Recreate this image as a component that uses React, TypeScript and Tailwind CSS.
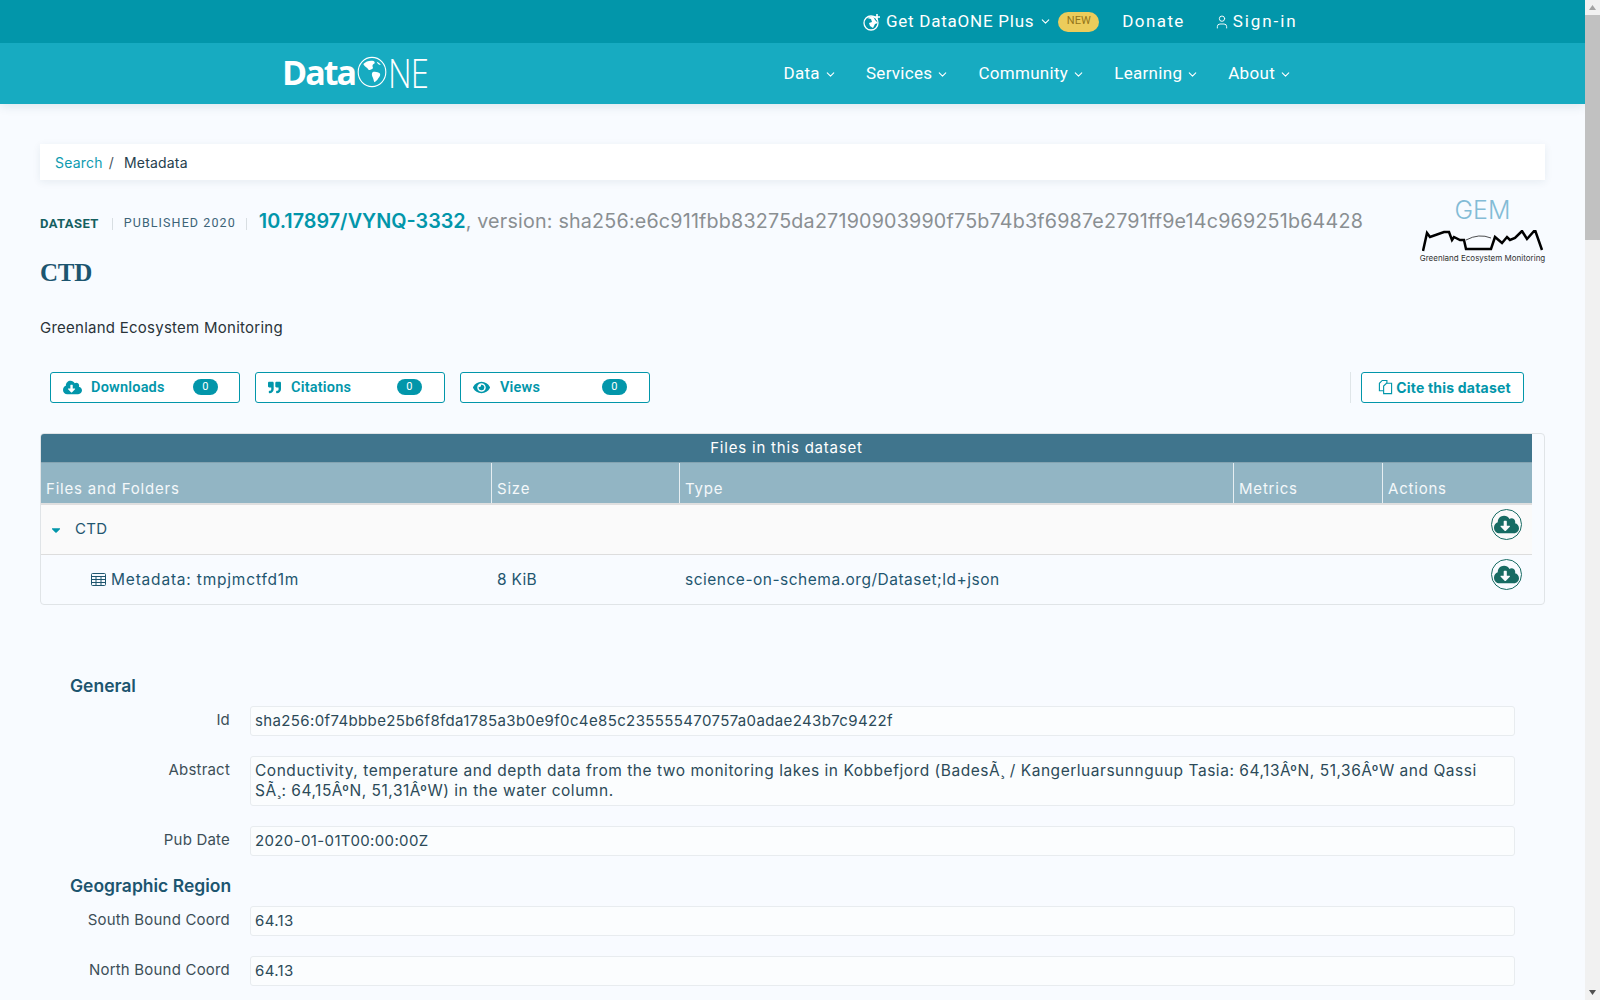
import { ChevronDown, User } from 'lucide-react';
import { FaCaretDown, FaCloudDownloadAlt, FaEye, FaQuoteRight } from 'react-icons/fa';

const NAV = ['Data', 'Services', 'Community', 'Learning', 'About'];

const COUNTS = [
  { label: 'Downloads', icon: <FaCloudDownloadAlt size={19} />, iconBox: 'w-[28px]', text: 'w-[102px]' },
  { label: 'Citations', icon: <FaQuoteRight size={13} />, iconBox: 'w-[23px]', text: 'w-[106px]' },
  { label: 'Views', icon: <FaEye size={17} />, iconBox: 'w-[27px]', text: 'w-[102px]' },
];

const COLS = 'grid grid-cols-[451px_188px_554px_149px_149px]';

function DownloadButton() {
  return (
    <span className="flex h-[31px] w-[31px] items-center justify-center rounded-full border border-[#176b63] text-[#176b63]">
      <FaCloudDownloadAlt size={25} />
    </span>
  );
}

function Field({ label, value, tall }: { label: string; value: string; tall?: boolean }) {
  return (
    <div className="mb-5 flex">
      <div className="w-[160px] shrink-0 pt-[3px] text-right text-[15px] tracking-[0.2px] text-[#3d4f58]">{label}</div>
      <div
        className={`ml-5 flex-1 rounded-[3px] border border-[#e8ecef] bg-[#fbfdfe] px-[4px] py-[4px] leading-[20px] text-[#2c4a58] ${
          tall ? 'h-[50px] text-[15.5px] tracking-[0.53px]' : 'h-[30px] text-[15px] tracking-[0.37px]'
        }`}
      >
        {value}
      </div>
    </div>
  );
}

function Logo() {
  return (
    <div className="mb-[3px] flex items-center font-['Open_Sans',sans-serif] text-white">
      <span className="text-[34px] font-bold leading-none tracking-[-2px]">Data</span>
      <svg width="30" height="32" viewBox="0 0 38 40" className="ml-[2px]">
        <ellipse cx="19" cy="20" rx="17.5" ry="18.5" fill="none" stroke="white" strokeWidth="1.4" />
        <path
          d="M8 10c3-4 9-5 13-4 2 1 2 3 0 4-1 1-2 2-1 4 1 1-1 3-3 3-2 1-3 0-4-2-2-1-4-3-5-5zM20 20c3-1 7 0 9 2 1 2 0 4-2 6-1 2-3 4-5 5-1-2-1-4-2-6-1-2-2-5 0-7zM25 7c2 1 4 2 5 4-2 0-4-1-5-4z"
          fill="white"
        />
      </svg>
      <span className="ml-[1px] w-[42px] origin-left scale-x-[0.8] text-[41px] font-light leading-none tracking-[-1px]">NE</span>
    </div>
  );
}

export default function App() {
  return (
    <div className="flex h-screen overflow-hidden bg-[#f8fbff] font-['Inter',sans-serif]">
      <div className="min-w-0 flex-1 overflow-hidden">
        <header className="shadow-[0_2px_10px_rgba(0,80,100,0.12)]">
          <div className="flex h-[43px] items-center bg-[#0296aa] pl-[863px] font-['Roboto',sans-serif] text-white">
            <svg width="18" height="18" viewBox="0 0 18 18" className="mr-[5px]">
              <circle cx="8" cy="10" r="7" fill="none" stroke="white" strokeWidth="1.3" />
              <path d="M4 5l4 1 1 3-3 1 1 3 3 2 2-4 3-1-3-3-2-4z" fill="white" />
              <path d="M14 1v6M11 4h6" stroke="white" strokeWidth="1.6" />
            </svg>
            <span className="text-[17px] tracking-[0.75px]">Get DataONE Plus</span>
            <ChevronDown size={13} strokeWidth={2} className="ml-[5px]" />
            <span className="ml-[6px] flex h-[20px] w-[41px] items-center justify-center rounded-[10px] bg-[#eccc5b] text-[11px] text-[#93751a]">
              NEW
            </span>
            <span className="ml-[23px] text-[17px] tracking-[1.4px]">Donate</span>
            <User size={16} strokeWidth={1.4} className="ml-[29px]" />
            <span className="ml-[3px] text-[17px] tracking-[1.9px]">Sign-in</span>
          </div>
          <div className="flex h-[61px] items-center bg-[#17abc1] pl-[282px] pr-[293px] font-['Roboto',sans-serif] text-white">
            <Logo />
            <nav className="ml-auto flex gap-[29px]">
              {NAV.map((item) => (
                <span key={item} className="flex items-center text-[17px] tracking-[0.3px]">
                  {item}
                  <ChevronDown size={13} strokeWidth={2} className="ml-[4px] mt-[2px]" />
                </span>
              ))}
            </nav>
          </div>
        </header>

        <main className="px-10 pt-10">
          <div className="flex h-9 items-center bg-white px-[15px] text-[14px] tracking-[0.2px] shadow-[0_2px_8px_rgba(30,60,90,0.08)]">
            <span className="text-[#0d9bb0]">Search</span>
            <span className="ml-[6px] text-[#4a5560]">/</span>
            <span className="ml-[10px] text-[#26404d]">Metadata</span>
          </div>

          <div className="mt-[14px] flex justify-between">
            <div className="pt-[13px]">
              <div className="flex items-center font-['Roboto',sans-serif]">
                <span className="mt-1 text-[13px] font-bold tracking-[0.4px] text-[#15605f]">DATASET</span>
                <span className="ml-[13px] mt-1 h-3 w-px bg-[#d8dee2]" />
                <span className="ml-[11px] mt-1 text-[12.5px] tracking-[1.1px] text-[#3c6478]">PUBLISHED 2020</span>
                <span className="ml-[10px] mt-1 h-3 w-px bg-[#d8dee2]" />
                <span className="ml-[12px] font-['Inter',sans-serif] text-[19.8px] font-semibold text-[#0296aa]">
                  10.17897/VYNQ-3332
                </span>
                <span className="font-['Inter',sans-serif] text-[19.7px] tracking-[0.2px] text-[#8a8f92]">
                  , version: sha256:e6c911fbb83275da27190903990f75b74b3f6987e2791ff9e14c969251b64428
                </span>
              </div>
              <h1 className="mt-[21px] font-['Liberation_Serif',serif] text-[25px] font-bold leading-[30px] tracking-[-0.3px] text-[#1c556f]">
                CTD
              </h1>
            </div>
            <div className="flex w-[125px] flex-col items-center pt-[3px]">
              <span className="text-[25px] font-light leading-[26px] text-[#83bcd6]">GEM</span>
              <svg width="122" height="22" viewBox="0 0 122 22" className="mt-[7px]">
                <path
                  d="M1 21L5 3 8 7 22 2 27 2 30 10 32 7 38 10 42 10 44 19 69 19 73 7 80 13 85 7 88 10 93 8 100 1 105 9 113 0 120 20"
                  fill="none"
                  stroke="black"
                  strokeWidth="2.5"
                />
                <path d="M44 10Q57 3 69 8" fill="none" stroke="black" strokeWidth="0.7" />
              </svg>
              <span className="whitespace-nowrap text-[8px] leading-[12px] text-[#333]">
                Greenland Ecosystem Monitoring
              </span>
            </div>
          </div>

          <p className="mt-[30px] text-[15px] leading-5 tracking-[0.25px] text-[#2a3339]">Greenland Ecosystem Monitoring</p>

          <div className="mt-[34px] flex items-center pl-[10px]">
            {COUNTS.map((item) => (
              <div
                key={item.label}
                className="mr-[15px] flex h-[31px] w-[190px] items-center rounded-[3px] border border-[#0296aa] bg-white pl-[12px] font-['Roboto',sans-serif] text-[14.5px] font-semibold tracking-[0.2px] text-[#0296aa]"
              >
                <span className={`flex justify-start ${item.iconBox}`}>{item.icon}</span>
                <span className={`pt-[1px] ${item.text}`}>{item.label}</span>
                <span className="flex h-4 w-[25px] items-center justify-center rounded-full bg-[#0296aa] text-[11px] font-normal text-white">
                  0
                </span>
              </div>
            ))}
            <div className="ml-auto h-[31px] w-px bg-[#dfe5e8]" />
            <div className="ml-[10px] mr-[21px] flex h-[31px] w-[163px] items-center justify-center rounded-[3px] border border-[#0296aa] bg-white pl-[4px] text-[14px] font-bold tracking-[0.2px] text-[#0296aa]">
              <svg width="15" height="16" viewBox="0 0 16 17" fill="none" stroke="currentColor" strokeWidth="1.2" className="mr-[3px]">
                <path d="M6 12.5H1.5V4.5L4.5 1.5H9.5V4.5" />
                <path d="M6 15.5V7.5L9 4.5H14.5V15.5Z" />
              </svg>
              Cite this dataset
            </div>
          </div>

          <section className="mt-[30px] overflow-hidden rounded-[4px] border border-[#e0e4e7] pr-[12px]">
            <div className="flex h-[29px] items-center justify-center border-b border-[#84a3b1] bg-[#40758d] pt-[2px] text-[15px] tracking-[0.8px] text-white">
              Files in this dataset
            </div>
            <div className={`${COLS} h-[42px] border-b-[2px] border-[#dfdfdf] bg-[#92b5c4] text-[15px] tracking-[0.8px] text-[#f4f8fa]`}>
              {['Files and Folders', 'Size', 'Type', 'Metrics', 'Actions'].map((col, i) => (
                <div key={col} className={`flex items-end pb-[2px] pl-[5px] ${i < 4 ? 'border-r border-[#e6eef2]' : ''}`}>
                  {col}
                </div>
              ))}
            </div>
            <div className="flex h-[50px] items-start justify-between border-b border-[#dddddd] bg-[#fafafa] text-[15px] tracking-[0.3px] text-[#1f566f]">
              <div className="flex h-[49px] items-center pl-[8px] pt-[1px]">
                <FaCaretDown size={14} className="text-[#0296aa]" />
                <span className="ml-[12px]">CTD</span>
              </div>
              <div className="mr-[10px] mt-[4px]">
                <DownloadButton />
              </div>
            </div>
            <div className={`${COLS} h-[49px] text-[15.5px] text-[#1f566f]`}>
              <div className="flex items-center pl-[50px]">
                <svg width="15" height="13" viewBox="0 0 15 13" fill="none" stroke="currentColor" strokeWidth="1">
                  <rect x="0.5" y="0.5" width="14" height="12" rx="1" />
                  <path d="M0.5 3.5H14.5M0.5 6.5H14.5M0.5 9.5H14.5M5 3.5V12.5M10 3.5V12.5" />
                </svg>
                <span className="ml-[5px] tracking-[0.8px]">Metadata: tmpjmctfd1m</span>
              </div>
              <div className="flex items-center pl-[5px] tracking-[0.3px]">8 KiB</div>
              <div className="flex items-center pl-[5px] tracking-[0.5px]">science-on-schema.org/Dataset;ld+json</div>
              <div />
              <div className="flex justify-end pr-[10px] pt-[4px]">
                <DownloadButton />
              </div>
            </div>
          </section>

          <section className="mt-[69px] pl-[30px] pr-[30px]">
            <h2 className="mb-[8px] text-[17.5px] font-semibold leading-[24px] text-[#1c556f]">General</h2>
            <Field label="Id" value="sha256:0f74bbbe25b6f8fda1785a3b0e9f0c4e85c235555470757a0adae243b7c9422f" />
            <Field
              label="Abstract"
              tall
              value="Conductivity, temperature and depth data from the two monitoring lakes in Kobbefjord (BadesÃ¸ / Kangerluarsunnguup Tasia: 64,13ÂºN, 51,36ÂºW and Qassi SÃ¸: 64,15ÂºN, 51,31ÂºW) in the water column."
            />
            <Field label="Pub Date" value="2020-01-01T00:00:00Z" />
            <h2 className="-mt-[2px] mb-[8px] text-[17.5px] font-semibold leading-[24px] text-[#1c556f]">
              Geographic Region
            </h2>
            <Field label="South Bound Coord" value="64.13" />
            <Field label="North Bound Coord" value="64.13" />
          </section>
        </main>
      </div>

      <div className="flex w-[15px] shrink-0 flex-col items-center bg-[#f1f1f1]">
        <svg width="9" height="15" viewBox="0 0 9 15" className="shrink-0">
          <path d="M4.5 5L8 10H1z" fill="#a3a3a3" />
        </svg>
        <div className="h-[225px] w-[15px] bg-[#c1c1c1]" />
        <svg width="9" height="15" viewBox="0 0 9 15" className="mt-auto shrink-0">
          <path d="M1 5h7L4.5 10z" fill="#505050" />
        </svg>
      </div>
    </div>
  );
}
